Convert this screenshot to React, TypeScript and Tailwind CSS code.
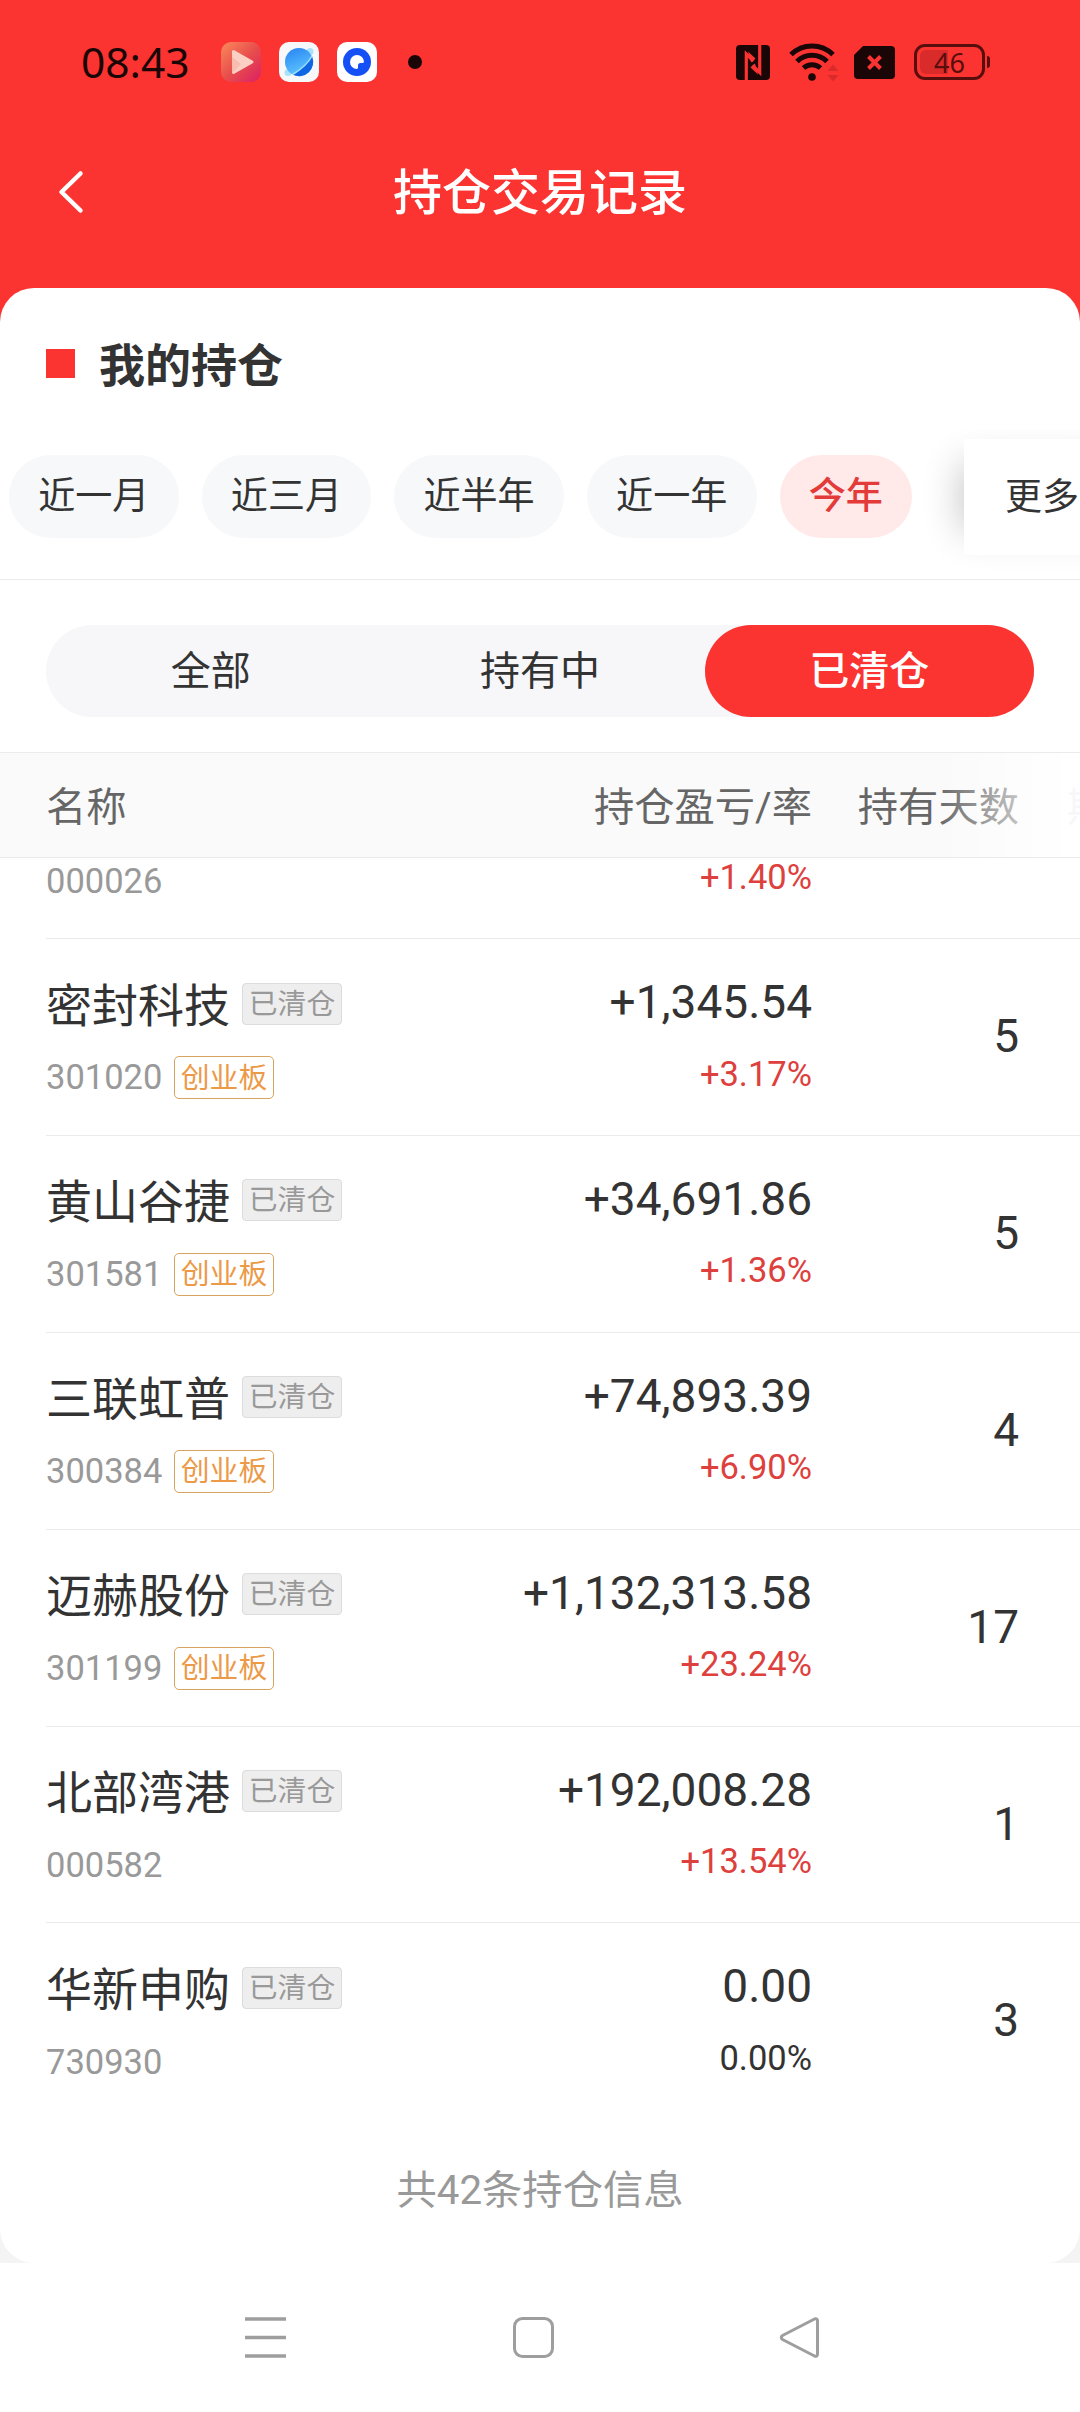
import React, { useState } from 'react';
import { clsx } from 'clsx';

interface Holding {
  name: string;
  code: string;
  board?: string;
  profit: string;
  rate: string;
  days: string;
}

const periods = ['近一月', '近三月', '近半年', '近一年', '今年'];
const tabs = ['全部', '持有中', '已清仓'];

const holdings: Holding[] = [
  { name: '密封科技', code: '301020', board: '创业板', profit: '+1,345.54', rate: '+3.17%', days: '5' },
  { name: '黄山谷捷', code: '301581', board: '创业板', profit: '+34,691.86', rate: '+1.36%', days: '5' },
  { name: '三联虹普', code: '300384', board: '创业板', profit: '+74,893.39', rate: '+6.90%', days: '4' },
  { name: '迈赫股份', code: '301199', board: '创业板', profit: '+1,132,313.58', rate: '+23.24%', days: '17' },
  { name: '北部湾港', code: '000582', profit: '+192,008.28', rate: '+13.54%', days: '1' },
  { name: '华新申购', code: '730930', profit: '0.00', rate: '0.00%', days: '3' },
];

const StatusBar: React.FC = () => (
  <div className="flex h-[124px] items-center pl-[81px] pr-[90px] text-[#1a0606]">
    <span className="w-[140px] font-['Noto_Sans'] text-[42.500px] leading-none">08:43</span>

    <div className="flex items-center gap-[18px]">
      <svg className="size-10" viewBox="0 0 40 40">
        <defs>
          <linearGradient id="video" x1="0" y1="0" x2="1" y2="1">
            <stop offset="0" stopColor="#fb8a5c" />
            <stop offset="0.5" stopColor="#e84f4c" />
            <stop offset="1" stopColor="#dc1f63" />
          </linearGradient>
        </defs>
        <rect width="40" height="40" rx="10" fill="url(#video)" />
        <path d="M12.500 9.500 31 20 12.500 30.500Z" fill="#fccfc4" stroke="#fccfc4" strokeWidth="3" strokeLinejoin="round" />
        <path d="M11 15 20 22 11 31Z" fill="#f9bab0" />
      </svg>
      <svg className="size-10" viewBox="0 0 40 40">
        <defs>
          <linearGradient id="planet" x1="0.2" y1="0" x2="0.6" y2="1">
            <stop offset="0" stopColor="#2b86f3" />
            <stop offset="1" stopColor="#62cbff" />
          </linearGradient>
        </defs>
        <rect width="40" height="40" rx="10" fill="#f7f8fa" />
        <circle cx="9" cy="30.500" r="3.500" fill="#a8e2fc" />
        <circle cx="31" cy="9.500" r="3.500" fill="#a8e2fc" />
        <circle cx="20" cy="20" r="14" fill="url(#planet)" />
        <path d="M33 14.500A14 14 0 0 1 14 32.700C22 28 29 22 33 14.500Z" fill="#0f66e2" />
        <path d="M33 14C29 21.500 22 27.500 13.500 32.500" fill="none" stroke="#9fe0ff" strokeWidth="1.500" />
      </svg>
      <svg className="size-10" viewBox="0 0 40 40">
        <rect width="40" height="40" rx="10" fill="#fff" />
        <circle cx="20" cy="20" r="14" fill="#1450f5" />
        <path d="M20 27a7 7 0 1 1 7-7l-1 1h-2.500a2.500 2.500 0 0 0-2.500 2.500V26Z" fill="#fff" />
      </svg>
    </div>
    <span className="ml-[31px] size-[14px] rounded-full bg-[#1a0606]" />

    <div className="ml-auto flex items-center">
      <svg className="h-[35px] w-[34px]" viewBox="0 0 34 35">
        <rect width="34" height="35" rx="4" fill="#1a0606" />
        <path d="M10.300 35V9L17.500 16M23.700 0V27.500L16.500 20.500" fill="none" stroke="#fb3331" strokeWidth="3.200" />
        <path d="M12 6.500 19.500 13.500 15 17.500ZM22 29.500 14.500 22.500 19 18.500Z" fill="#fb3331" />
      </svg>
      <svg className="ml-[19px] h-[40px] w-[50px]" viewBox="0 0 50 40">
        <g fill="none" stroke="#1a0606" strokeWidth="5">
          <path d="M2 12.500a30 30 0 0 1 42 0" />
          <path d="M8 19.500a21 21 0 0 1 30 0" />
          <path d="M14.500 26a12.500 12.500 0 0 1 17 0" />
        </g>
        <circle cx="23" cy="35" r="3.800" fill="#1a0606" />
        <path d="m38.500 29 5.500-6.500 5.500 6.500ZM38.500 33l5.500 6.500 5.500-6.500Z" fill="#d92b2a" />
      </svg>
      <svg className="ml-[15px] h-[33px] w-[41px]" viewBox="0 0 41 33">
        <path d="M9 0h28a4 4 0 0 1 4 4v25a4 4 0 0 1-4 4H4a4 4 0 0 1-4-4V9Z" fill="#1a0606" />
        <path d="m14.500 10.500 12 12m0-12-12 12" stroke="#fb3331" strokeWidth="4" />
      </svg>
      <div className="ml-[19px] flex h-9 w-[71px] items-center rounded-[11px] border-[3px] border-[#570e0d] p-[3px]">
        <div className="h-full w-7 rounded-l-[6px] bg-[#d92b2a]" />
        <span className="-ml-[14px] font-['Noto_Sans'] text-[27px] leading-none text-[#570e0d]">46</span>
      </div>
      <span className="ml-[2px] h-3 w-[3px] rounded-r-sm bg-[#570e0d]" />
    </div>
  </div>
);

const Row: React.FC<{ item: Holding; last: boolean }> = ({ item, last }) => (
  <div className={clsx('ml-[46px] flex h-[196.900px] shrink-0 border-b', last ? 'border-transparent' : 'border-[#ebebeb]')}>
    <div className="w-[380px] pt-[43.500px]">
      <div className="flex h-[46px] items-center text-[46px] leading-none text-[#333]">
        {item.name}
        <span className="mb-[4px] ml-3 flex h-[42px] w-[100px] items-center justify-center rounded-[4px] border border-[#dcdcdc] bg-[#eee] pt-px text-[28.800px] text-[#999]">
          已清仓
        </span>
      </div>
      <div className="mt-[27px] flex h-[44px] items-center text-[34.500px] leading-none text-[#999]">
        <span className="w-32">{item.code}</span>
        {item.board && (
          <span className="flex h-[43px] w-[100px] items-center justify-center rounded-[5px] border border-[#d8a35f] pt-px text-[28.800px] text-[#ec9a48]">
            {item.board}
          </span>
        )}
      </div>
    </div>
    <div className="w-[386px] pt-[40px] text-right">
      <div className="text-[46px] leading-[46px] text-[#333]">{item.profit}</div>
      <div className={clsx('mt-[30.500px] text-[34.500px] leading-[36px]', item.rate.startsWith('+') ? 'text-[#dd403d]' : 'text-[#333]')}>
        {item.rate}
      </div>
    </div>
    <div className="w-[207px] pt-[74px] text-right text-[46px] leading-[46px] text-[#333]">{item.days}</div>
  </div>
);

export default function App() {
  const [period, setPeriod] = useState('今年');
  const [tab, setTab] = useState('已清仓');

  return (
    <div className="flex h-[2412px] w-[1080px] flex-col overflow-hidden bg-[#f4f4f4] font-[Roboto,'Noto_Sans_CJK_SC',sans-serif]">
      <header className="-mb-10 h-[328px] shrink-0 bg-[#fb3331]">
        <StatusBar />
        <div className="flex h-[137px] items-center pl-[56px]">
          <svg className="mb-[2px] h-[44px] w-[30px]" viewBox="0 0 30 44" fill="none" stroke="#fff" strokeWidth="4.500" strokeLinecap="round" strokeLinejoin="round">
            <path d="M24.500 3.500 5.500 22 24.500 40.500" />
          </svg>
          <h1 className="mr-[86px] flex-1 pt-[2px] text-center text-[49px] font-medium leading-none text-white">持仓交易记录</h1>
        </div>
      </header>

      <main className="flex h-[1975px] shrink-0 flex-col overflow-hidden rounded-[34px] bg-white">
        <h2 className="flex h-[142px] shrink-0 items-center pl-[46px] pt-[13px] text-[46px] font-bold leading-none text-[#333]">
          <span className="mb-[5px] mr-[24px] size-[29px] bg-[#fb3331]" />
          我的持仓
        </h2>

        <div className="flex h-[150px] shrink-0 items-start overflow-hidden border-b border-[#ebebeb] pl-[9px]">
          <div className="flex gap-[23px] pt-[25px]">
            {periods.map((p) => (
              <button
                key={p}
                onClick={() => setPeriod(p)}
                className={clsx(
                  'h-[83px] shrink-0 whitespace-nowrap rounded-full px-[29.200px] text-[37.100px] leading-none',
                  p === period ? 'bg-[#ffe9e9] font-medium text-[#e33b39]' : 'bg-[#f7f8fa] text-[#333]'
                )}
              >
                {p}
              </button>
            ))}
          </div>
          <button className="mt-[9px] ml-[52px] h-[116px] shrink-0 whitespace-nowrap bg-white pl-[41px] pr-20 text-[37px] leading-none text-[#333] shadow-[-26px_0_38px_-24px_rgba(0,0,0,0.24)]">
            更多
          </button>
        </div>

        <div className="mx-[46px] mt-[45px] flex h-[92px] shrink-0 rounded-full bg-[#f7f7fa]">
          {tabs.map((t) => (
            <button
              key={t}
              onClick={() => setTab(t)}
              className={clsx(
                'flex-1 rounded-full pt-px text-[40px] leading-none',
                t === tab ? 'bg-[#fb3331] font-medium text-white' : 'text-[#333]'
              )}
            >
              {t}
            </button>
          ))}
        </div>

        <div className="relative mt-[35px] flex h-[106px] shrink-0 items-center overflow-hidden border-y border-[#ebebeb] bg-[#fafafa] pl-[46px] pt-[6px] text-[40.300px] leading-none text-[#666]">
          <span className="w-[280px] shrink-0">名称</span>
          <span className="w-[486px] shrink-0 text-right">持仓盈亏/率</span>
          <span className="w-[207px] shrink-0 text-right">持有天数</span>
          <span className="ml-[48px] shrink-0">期</span>
          <div className="absolute inset-y-0 right-0 w-[144px] bg-gradient-to-r from-white/0 to-white/95 to-90%" />
        </div>

        {/* row scrolled half under the table head */}
        <div className="ml-[46px] flex h-[81px] shrink-0 border-b border-[#ebebeb] text-[34.500px] leading-[36px]">
          <span className="w-[380px] pt-[5px] text-[#999]">000026</span>
          <span className="w-[386px] pt-px text-right text-[#dd403d]">+1.40%</span>
        </div>

        {holdings.map((item, i) => (
          <Row key={item.code} item={item} last={i === holdings.length - 1} />
        ))}

        <p className="mt-[51px] text-center text-[40.300px] leading-none text-[#999]">共42条持仓信息</p>
      </main>

      <nav className="flex flex-1 items-center bg-white pl-[243px]">
        <svg className="size-[46px]" viewBox="0 0 46 46" stroke="#9e9e9e" strokeWidth="3.500">
          <path d="M2 4h41M2 22.500h41M2 41h41" />
        </svg>
        <svg className="ml-[222px] size-[46px]" viewBox="0 0 46 46" fill="none" stroke="#9e9e9e" strokeWidth="3">
          <rect x="3.500" y="3.500" width="38" height="38" rx="8" />
        </svg>
        <svg className="ml-[220px] size-[46px]" viewBox="0 0 46 46" fill="none" stroke="#9e9e9e" strokeWidth="3" strokeLinejoin="round">
          <path d="M37.500 4 5.500 20.500q-2.500 2 0 4L37.500 41q3 1 3-2V6q0-3-3-2Z" />
        </svg>
      </nav>
    </div>
  );
}
